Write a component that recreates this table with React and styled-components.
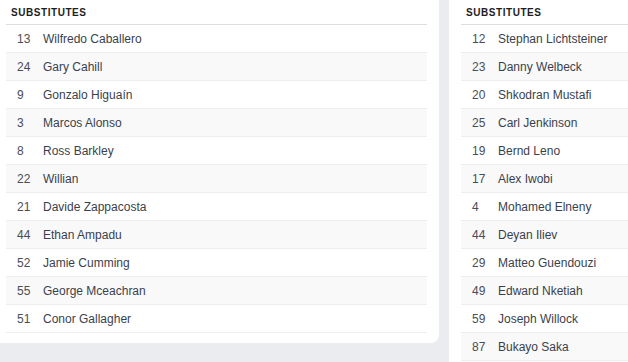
import React from "react";
import styled, { createGlobalStyle } from "styled-components";

const Global = createGlobalStyle`
  html, body { margin: 0; padding: 0; }
  body {
    background: #ebecef;
    font-family: "Liberation Sans", Arial, sans-serif;
    overflow: hidden;
  }
`;

const Viewport = styled.div`
  width: 100vw;
  height: 100vh;
  overflow: hidden;
`;

const Page = styled.div`
  display: flex;
  align-items: flex-start;
  gap: 10px;
  margin-left: -6px;
`;

const Card = styled.section`
  flex: 0 0 ${(p) => p.$width}px;
  background: #fff;
  padding: 0 12px 10px;
  box-sizing: border-box;
  border-radius: 0 0 8px 8px;
`;

const Header = styled.div`
  padding: 6px 5px 5px;
  line-height: 13px;
  font-size: 10px;
  font-weight: 700;
  letter-spacing: 0.55px;
  color: #1e1e1e;
  text-transform: uppercase;
  border-bottom: 1px solid #dedede;
`;

const Row = styled.div`
  display: grid;
  grid-template-columns: 37px 1fr;
  align-items: center;
  height: 26px;
  padding-top: 1px;
  border-bottom: 1px solid #eeeeee;
  background: ${(p) => (p.$alt ? "#f9f9f9" : "#fff")};
  font-size: 12px;
`;

const Num = styled.span`
  padding-left: 11px;
  color: #4a4d55;
`;

const Name = styled.span`
  color: #3a3f4d;
`;

const left = [
  [13, "Wilfredo Caballero"],
  [24, "Gary Cahill"],
  [9, "Gonzalo Higuaín"],
  [3, "Marcos Alonso"],
  [8, "Ross Barkley"],
  [22, "Willian"],
  [21, "Davide Zappacosta"],
  [44, "Ethan Ampadu"],
  [52, "Jamie Cumming"],
  [55, "George Mceachran"],
  [51, "Conor Gallagher"],
];

const right = [
  [12, "Stephan Lichtsteiner"],
  [23, "Danny Welbeck"],
  [20, "Shkodran Mustafi"],
  [25, "Carl Jenkinson"],
  [19, "Bernd Leno"],
  [17, "Alex Iwobi"],
  [4, "Mohamed Elneny"],
  [44, "Deyan Iliev"],
  [29, "Matteo Guendouzi"],
  [49, "Edward Nketiah"],
  [59, "Joseph Willock"],
  [87, "Bukayo Saka"],
];

function Subs({ players, width }) {
  return (
    <Card $width={width}>
      <Header>Substitutes</Header>
      {players.map(([n, name], i) => (
        <Row key={name} $alt={i % 2 === 1}>
          <Num>{n}</Num>
          <Name>{name}</Name>
        </Row>
      ))}
    </Card>
  );
}

export default function App() {
  return (
    <Viewport>
      <Global />
      <Page>
        <Subs players={left} width={445} />
        <Subs players={right} width={445} />
      </Page>
    </Viewport>
  );
}
